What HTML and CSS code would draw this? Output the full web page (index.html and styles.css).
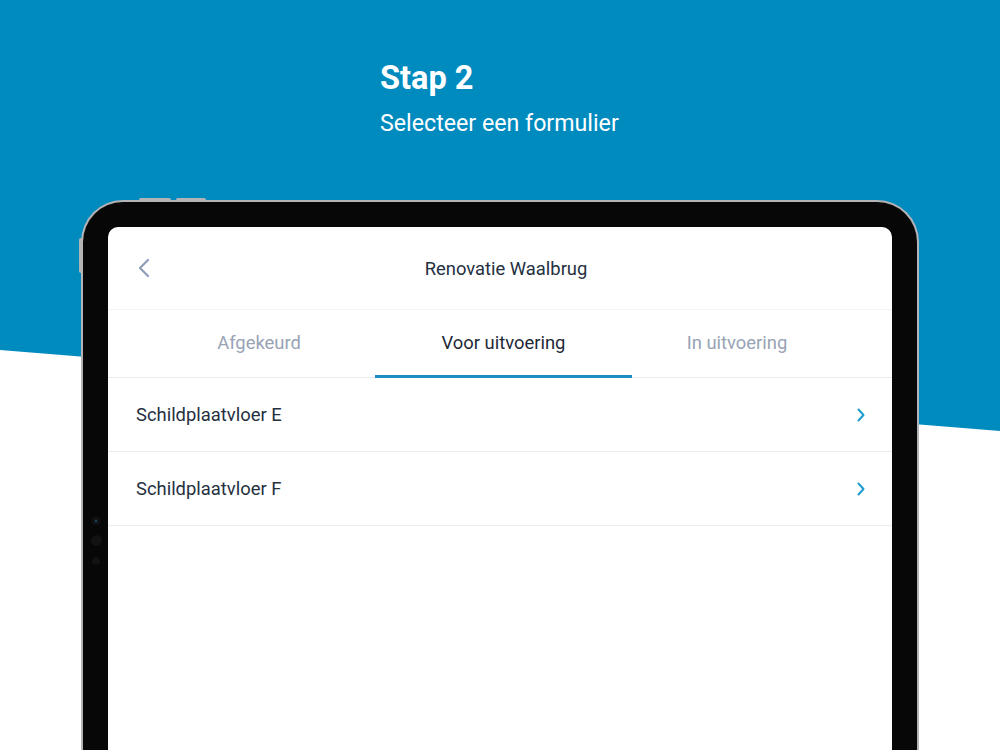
FILE: index.html
```html
<!DOCTYPE html>
<html lang="nl">
<head>
<meta charset="utf-8">
<title>Stap 2</title>
<link rel="stylesheet" href="styles.css">
</head>
<body>
<div class="page">
  <div class="bg"></div>
  <header class="intro">
    <h1 class="intro-title">Stap 2</h1>
    <p class="intro-sub">Selecteer een formulier</p>
  </header>
  <div class="device">
    <span class="btn-top btn-top-1"></span>
    <span class="btn-top btn-top-2"></span>
    <span class="btn-side"></span>
    <span class="cam cam-1"></span>
    <span class="cam cam-2"></span>
    <span class="cam cam-3"></span>
    <div class="screen">
      <div class="appbar">
        <svg class="back" width="14" height="20" viewBox="0 0 14 20"><path d="M11 2 L3 10 L11 18" fill="none" stroke="#8d9db5" stroke-width="2.2" stroke-linecap="round" stroke-linejoin="round"/></svg>
        <div class="appbar-title">Renovatie Waalbrug</div>
      </div>
      <nav class="tabs">
        <div class="tab">Afgekeurd</div>
        <div class="tab active">Voor uitvoering</div>
        <div class="tab">In uitvoering</div>
      </nav>
      <ul class="list">
        <li class="row"><span>Schildplaatvloer E</span><svg class="chev" width="8" height="14" viewBox="0 0 8 14"><path d="M1.5 1.5 L6.5 7 L1.5 12.5" fill="none" stroke="#1c9ccf" stroke-width="2" stroke-linecap="round" stroke-linejoin="round"/></svg></li>
        <li class="row"><span>Schildplaatvloer F</span><svg class="chev" width="8" height="14" viewBox="0 0 8 14"><path d="M1.5 1.5 L6.5 7 L1.5 12.5" fill="none" stroke="#1c9ccf" stroke-width="2" stroke-linecap="round" stroke-linejoin="round"/></svg></li>
      </ul>
    </div>
  </div>
</div>
</body>
</html>
```
FILE: styles.css
```css
html, body {
  margin: 0;
  padding: 0;
}
body {
  background: #ffffff;
  font-family: Roboto, "Noto Sans", sans-serif;
}
.page {
  position: relative;
  width: 1000px;
  height: 750px;
  overflow: hidden;
}
.bg {
  position: absolute;
  inset: 0;
  background: #008bbf;
  clip-path: polygon(0 0, 1000px 0, 1000px 431px, 0 350px);
}
.intro {
  position: relative;
  padding: 60px 0 0 380px;
  color: #ffffff;
  height: 143px;
  box-sizing: border-box;
}
.intro-title {
  margin: 0;
  font-size: 32.5px;
  line-height: 36px;
  font-weight: 700;
}
.intro-sub {
  margin: 13px 0 0;
  font-size: 23.2px;
  line-height: 28px;
  font-weight: 400;
}
.device {
  position: relative;
  width: 838px;
  height: 600px;
  margin: 57px auto 0;
  box-sizing: border-box;
  border: 2px solid #b4b4b6;
  border-bottom: none;
  border-radius: 42px 42px 0 0;
  background: #070707;
  padding: 25px 25px 0;
}
.btn-top {
  position: absolute;
  top: -4px;
  height: 3px;
  background: #b4b4b6;
  border-radius: 2px 2px 0 0;
}
.btn-top-1 { left: 56px; width: 32px; }
.btn-top-2 { left: 93px; width: 30px; }
.btn-side {
  position: absolute;
  left: -4px;
  top: 36px;
  width: 3px;
  height: 35px;
  background: #b4b4b6;
  border-radius: 2px 0 0 2px;
}
.cam {
  position: absolute;
  left: 9px;
  width: 8px;
  height: 8px;
  border-radius: 50%;
  background: #141414;
}
.cam-1 { top: 315px; background: #0f1a20; box-shadow: inset 0 0 0 2px #111; }
.cam-1::after {
  content: "";
  position: absolute;
  left: 3px; top: 3px;
  width: 2px; height: 2px;
  border-radius: 50%;
  background: #1f5566;
}
.cam-2 { top: 333px; width: 11px; height: 11px; left: 8px; background: #121212; }
.cam-3 { top: 355px; background: #111111; }
.screen {
  background: #ffffff;
  border-radius: 10px 10px 0 0;
  height: 600px;
  overflow: hidden;
}
.appbar {
  position: relative;
  height: 82px;
  display: flex;
  align-items: center;
  justify-content: center;
  border-bottom: 1px solid #f1f3f6;
}
.back {
  position: absolute;
  left: 29px;
  top: 31px;
}
.appbar-title {
  font-size: 18.4px;
  color: #25303f;
  margin-left: 12px;
}
.tabs {
  display: grid;
  grid-template-columns: 232px 257px 210px;
  padding-left: 35px;
  height: 67px;
  border-bottom: 1px solid #e8ecf1;
}
.tab {
  display: flex;
  align-items: center;
  justify-content: center;
  font-size: 18.4px;
  color: #98a3b5;
  box-sizing: border-box;
  padding-bottom: 2px;
}
.tab.active {
  color: #1f2937;
  border-bottom: 3px solid #1b8dc3;
  padding-bottom: 0;
  margin-bottom: -1px;
}
.list {
  list-style: none;
  margin: 0;
  padding: 0;
}
.row {
  height: 73px;
  display: flex;
  align-items: center;
  justify-content: space-between;
  padding: 0 27px 0 28px;
  font-size: 18.4px;
  color: #25303f;
  border-bottom: 1px solid #e8edf3;
}
.chev {
  display: block;
}
```
